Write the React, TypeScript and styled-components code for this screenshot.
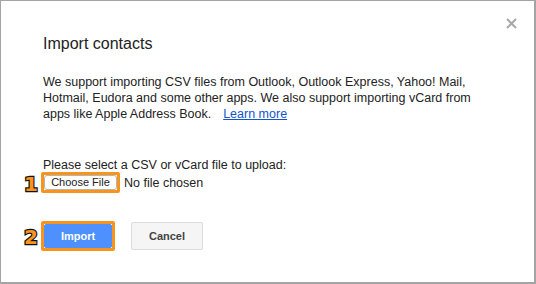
import { FC, ReactNode } from 'react'
import styled, { createGlobalStyle } from 'styled-components'

const GlobalStyle = createGlobalStyle`
    html, body {
        margin: 0;
        padding: 0;
        background: #fff;
    }
    body {
        font-family: "Liberation Sans", Arial, sans-serif;
        color: #222;
    }
`

const ORANGE = '#f7941e';

interface IAnnotatedProps {
    step: number,
    children: ReactNode
}

const Annotated : FC<IAnnotatedProps> = ({step, children}) => (
    <AnnotationRing>
        <StepBadge>{step}</StepBadge>
        {children}
    </AnnotationRing>
)

const App : FC = () => {
    return (
        <>
            <GlobalStyle />
            <Dialog>
                <CloseButton aria-label="Close">
                    <svg width="11" height="11" viewBox="0 0 11 11">
                        <path d="M1 1L10 10M10 1L1 10" stroke="#a8a8a8" strokeWidth="2" />
                    </svg>
                </CloseButton>
                <Title>Import contacts</Title>
                <Description>
                    We support importing CSV files from Outlook, Outlook Express, Yahoo! Mail,
                    Hotmail, Eudora and some other apps. We also support importing vCard from
                    apps like Apple Address Book.
                    <LearnMore href="#">Learn more</LearnMore>
                </Description>
                <UploadLabel>Please select a CSV or vCard file to upload:</UploadLabel>
                <FileRow>
                    <Annotated step={1}>
                        <ChooseFileButton>Choose File</ChooseFileButton>
                    </Annotated>
                    <FileStatus>No file chosen</FileStatus>
                </FileRow>
                <ButtonRow>
                    <Annotated step={2}>
                        <ActionButton $primary>Import</ActionButton>
                    </Annotated>
                    <ActionButton>Cancel</ActionButton>
                </ButtonRow>
            </Dialog>
        </>
    )
}

const Dialog = styled.div`
    position: relative;
    box-sizing: border-box;
    width: 536px;
    height: 284px;
    border: solid #a4a4a4;
    border-width: 1px 2px 2px 1px;
    background: #fff;
    padding: 33px 42px 0 42px;

    display: flex;
    flex-direction: column;
    align-items: flex-start;
`

const CloseButton = styled.button`
    position: absolute;
    top: 17px;
    right: 17px;
    border: none;
    background: none;
    padding: 0;
    width: 11px;
    height: 11px;
    display: flex;
    cursor: pointer;
`

const Title = styled.h1`
    margin: 0;
    font-size: 16px;
    font-weight: normal;
    line-height: 20px;
    color: #222;
`

const Description = styled.p`
    margin: 20px 0 0 0;
    width: 450px;
    font-size: 12.5px;
    line-height: 16px;
`

const LearnMore = styled.a`
    margin-left: 12px;
    color: #1155cc;
    text-decoration: underline;
`

const UploadLabel = styled.div`
    margin-top: 35px;
    font-size: 12.5px;
    line-height: 16px;
`

const FileRow = styled.div`
    display: flex;
    align-items: center;
    gap: 4px;
    margin-top: -1px;
`

const AnnotationRing = styled.div`
    position: relative;
    display: flex;
    margin-left: -2px;
    border: 3px solid ${ORANGE};
    border-radius: 2px;
`

const StepBadge = styled.span`
    position: absolute;
    right: calc(100% + 6px);
    top: 50%;
    transform: translateY(-46%);
    font-family: "DejaVu Sans", sans-serif;
    font-weight: bold;
    font-size: 20px;
    line-height: 1;
    color: ${ORANGE};
    -webkit-text-stroke: 2.4px #111;
    paint-order: stroke fill;
`

const ChooseFileButton = styled.button`
    box-sizing: border-box;
    height: 15px;
    min-width: 73px;
    padding: 0 6px;
    border: 1px solid #b5b5b5;
    border-radius: 3px;
    background: #fff;
    font-family: "Liberation Sans", Arial, sans-serif;
    font-size: 11px;
    line-height: 13px;
    color: #222;
`

const FileStatus = styled.span`
    font-size: 12.5px;
    line-height: 16px;
`

const ButtonRow = styled.div`
    display: flex;
    align-items: center;
    gap: 16px;
    margin-top: 28px;
`

const ActionButton = styled.button<{ $primary?: boolean }>`
    box-sizing: border-box;
    height: ${({$primary}) => $primary ? '24px' : '28px'};
    min-width: ${({$primary}) => $primary ? '68px' : '72px'};
    padding: 0 8px;
    border: 1px solid ${({$primary}) => $primary ? '#4d90fe' : '#dcdcdc'};
    border-radius: 2px;
    background: ${({$primary}) => $primary ? '#4d90fe' : '#f5f5f5'};
    color: ${({$primary}) => $primary ? '#fff' : '#444'};
    font-family: "Liberation Sans", Arial, sans-serif;
    font-size: 11px;
    font-weight: bold;
    cursor: pointer;
`

export default App
